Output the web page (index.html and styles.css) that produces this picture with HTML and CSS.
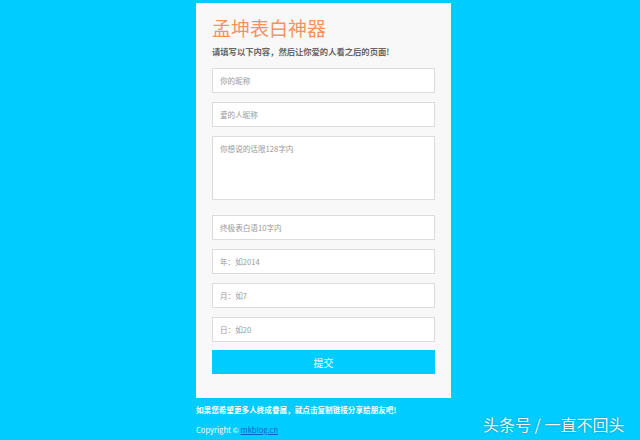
FILE: index.html
```html
<!DOCTYPE html>
<html lang="zh-CN">
<head>
    <meta charset="UTF-8">
    <meta name="viewport" content="width=device-width, initial-scale=1.0">
    <title>孟坤表白神器</title>
    <link rel="stylesheet" href="styles.css">
</head>
<body>
    <div class="wrap">
        <div class="card">
            <h1 class="title">孟坤表白神器</h1>
            <p class="tip">请填写以下内容，然后让你爱的人看之后的页面!</p>
            <form class="form">
                <input class="field" type="text" placeholder="你的昵称">
                <input class="field" type="text" placeholder="爱的人昵称">
                <textarea class="field area" placeholder="你想说的话限128字内"></textarea>
                <input class="field gap-top" type="text" placeholder="终极表白语10字内">
                <input class="field" type="text" placeholder="年：如2014">
                <input class="field" type="text" placeholder="月：如7">
                <input class="field" type="text" placeholder="日：如20">
                <button class="submit" type="button">提交</button>
            </form>
        </div>
        <p class="share">如果您希望更多人终成眷属，就点击复制链接分享给朋友吧!</p>
        <p class="copy">Copyright © <a href="#">mkblog.cn</a></p>
    </div>
    <div class="mark">头条号 / 一直不回头</div>
</body>
</html>
```

FILE: styles.css
```css
body {
    margin: 0;
    padding-top: 3px;
    background: #00ccff;
    font-family: "Noto Sans CJK SC", "Liberation Sans", sans-serif;
    height: 437px;
    overflow: hidden;
}
.wrap {
    width: 255px;
    margin-left: 196px;
}
.card {
    background: #f8f8f8;
    padding: 12px 16px 24px;
}
.title {
    margin: 0;
    font-size: 19px;
    line-height: 26px;
    font-weight: normal;
    color: #f8925c;
}
.tip {
    margin: 3px 0 0;
    font-size: 8.3px;
    line-height: 14px;
    font-weight: bold;
    color: #666;
}
.form {
    display: flex;
    flex-direction: column;
    gap: 9px;
    margin-top: 10px;
}
.field {
    display: block;
    box-sizing: border-box;
    width: 100%;
    height: 25px;
    margin: 0;
    padding: 0 7px;
    border: 1px solid #dcdcdc;
    background: #fff;
    font-family: inherit;
    font-size: 7.6px;
    color: #555;
    outline: none;
}
.field::placeholder {
    color: #999;
}
.area {
    height: 64px;
    padding-top: 6px;
    resize: none;
}
.gap-top {
    margin-top: 6px;
}
.submit {
    height: 24px;
    margin-top: -1px;
    border: none;
    background: #00ccff;
    color: #fff;
    font-family: inherit;
    font-size: 10px;
}
.share {
    margin: 5px 0 0;
    font-size: 7.6px;
    line-height: 14px;
    font-weight: bold;
    color: #fff;
    white-space: nowrap;
}
.copy {
    margin: 6px 0 0;
    font-size: 7.6px;
    line-height: 14px;
    color: #fff;
}
.copy a {
    color: #0b5fd0;
}
.mark {
    position: absolute;
    left: 483px;
    top: 413px;
    font-size: 16px;
    line-height: 22px;
    color: #f4f4f4;
    text-shadow: 0 0 2px rgba(0, 0, 0, 0.35);
    white-space: nowrap;
}
```
